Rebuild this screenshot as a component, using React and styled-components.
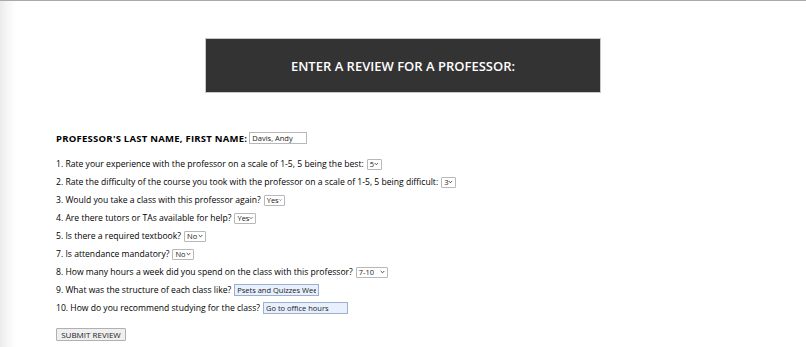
import React from "react";
import styled, { createGlobalStyle } from "styled-components";

const Global = createGlobalStyle`
  html, body { margin: 0; padding: 0; background: #fff; }
  body { font-family: "Open Sans", "Noto Sans", sans-serif; color: #000; }
`;

const Page = styled.div`
  width: 806px;
  height: 347px;
  box-sizing: border-box;
  border-top: 1px solid #a9a9a9;
  background: linear-gradient(to right, #ebebeb 0px, #f7f7f7 8px, #ffffff 16px);
  overflow: hidden;
  padding-top: 37px;
`;

const Banner = styled.div`
  width: 394px;
  height: 53px;
  margin-left: 205px;
  background: #333333;
  border: 1px solid #c8c8c8;
  display: flex;
  align-items: center;
  justify-content: center;
  color: #fff;
  font-size: 13px;
  font-weight: 600;
`;

const Form = styled.form`
  margin: 38px 0 0 56px;
  display: flex;
  flex-direction: column;
  font-size: 8.6px;
  font-weight: 500;
`;

const NameRow = styled.div`
  display: flex;
  align-items: center;
  height: 14px;
  font-weight: 700;
  margin-bottom: 10px;
`;

const NameLabel = styled.span`
  white-space: pre;
  margin-right: 2px;
  font-size: 9.5px;
  letter-spacing: 0.25px;
`;

const Row = styled.div`
  display: flex;
  align-items: center;
  height: 18px;
`;

const Label = styled.span`
  white-space: pre;
  margin-right: 3px;
`;

const TextBox = styled.input`
  box-sizing: border-box;
  width: ${(p) => p.$w}px;
  height: 12px;
  padding: 0 2px;
  border: 1px solid ${(p) => (p.$filled ? "#9ab0d0" : "#b8b8b8")};
  background: ${(p) => (p.$filled ? "#e8f0fe" : "#fff")};
  font-family: "Open Sans", sans-serif;
  font-size: 7.5px;
  font-weight: 400;
  color: #222;
  outline: none;
`;

const SelectBox = styled.span`
  box-sizing: border-box;
  display: inline-flex;
  align-items: center;
  height: 11px;
  padding: 0 2px;
  border: 1px solid #b8b8b8;
  border-radius: 1px;
  font-size: 7.5px;
  font-weight: 400;
  color: #222;
  background: #fff;
  width: ${(p) => p.$w}px;
  justify-content: space-between;
`;

const Chevron = () => (
  <svg width="5" height="4" viewBox="0 0 5 4">
    <path d="M0.7 1 L2.5 2.8 L4.3 1" stroke="#333" strokeWidth="0.9" fill="none" />
  </svg>
);

const Select = ({ value, w }) => (
  <SelectBox $w={w}>
    <span>{value}</span>
    <Chevron />
  </SelectBox>
);

const Submit = styled.button`
  box-sizing: border-box;
  width: 70px;
  height: 13px;
  margin-top: 11px;
  padding: 0;
  border: 1px solid #b0b0b0;
  border-radius: 1px;
  background: #efefef;
  font-family: "Open Sans", sans-serif;
  font-size: 8px;
  color: #222;
  text-transform: uppercase;
`;

const questions = [
  { t: "1. Rate your experience with the professor on a scale of 1-5, 5 being the best:", s: "5", w: 15 },
  { t: "2. Rate the difficulty of the course you took with the professor on a scale of 1-5, 5 being difficult:", s: "3", w: 15 },
  { t: "3. Would you take a class with this professor again?", s: "Yes", w: 21 },
  { t: "4. Are there tutors or TAs available for help?", s: "Yes", w: 22 },
  { t: "5. Is there a required textbook?", s: "No", w: 22 },
  { t: "7. Is attendance mandatory?", s: "No", w: 22 },
  { t: "8. How many hours a week did you spend on the class with this professor?", s: "7-10", w: 32 },
];

export default function App() {
  return (
    <>
      <Global />
      <Page>
        <Banner>ENTER A REVIEW FOR A PROFESSOR:</Banner>
        <Form>
          <NameRow>
            <NameLabel>PROFESSOR'S LAST NAME, FIRST NAME:</NameLabel>
            <TextBox $w={58} defaultValue="Davis, Andy" />
          </NameRow>
          {questions.map((q) => (
            <Row key={q.t}>
              <Label>{q.t}</Label>
              <Select value={q.s} w={q.w} />
            </Row>
          ))}
          <Row>
            <Label>9. What was the structure of each class like?</Label>
            <TextBox $w={85} $filled defaultValue="Psets and Quizzes Weekly" />
          </Row>
          <Row>
            <Label>10. How do you recommend studying for the class?</Label>
            <TextBox $w={85} $filled defaultValue="Go to office hours" />
          </Row>
          <div>
            <Submit type="button">Submit Review</Submit>
          </div>
        </Form>
      </Page>
    </>
  );
}
